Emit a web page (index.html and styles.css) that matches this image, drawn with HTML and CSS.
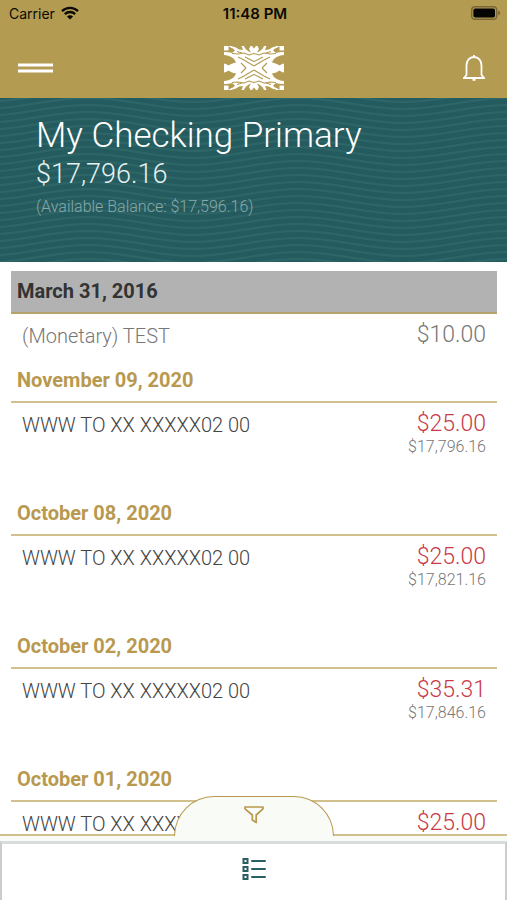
FILE: index.html
```html
<!DOCTYPE html>
<html lang="en">
<head>
<meta charset="utf-8">
<meta name="viewport" content="width=device-width, initial-scale=1">
<title>My Checking Primary</title>
<link rel="stylesheet" href="styles.css">
</head>
<body>
<div class="app">
  <header class="top">
    <div class="status">
      <div class="status-left">
        <span>Carrier</span>
        <svg class="wifi" viewBox="0 0 18 14" aria-hidden="true">
          <path d="M1 5.2a11.5 11.5 0 0 1 16 0M3.8 8.1a7.5 7.5 0 0 1 10.4 0" fill="none" stroke="#0b0a05" stroke-width="2.3"/>
          <path d="M9 13.6 5.9 10.5a4.4 4.4 0 0 1 6.2 0z" fill="#0b0a05"/>
        </svg>
      </div>
      <span class="clock">11:48 PM</span>
      <svg class="battery" viewBox="0 0 30 14" aria-hidden="true">
        <rect x="0.7" y="0.7" width="25" height="12.6" rx="3.4" fill="none" stroke="#7a6736" stroke-width="1.4"/>
        <rect x="2.4" y="2.4" width="21.6" height="9.2" rx="1.8" fill="#050402"/>
        <path d="M27.2 4.6v4.8c1.2-.4 1.9-1.3 1.9-2.4s-.7-2-1.9-2.4z" fill="#7a6736"/>
      </svg>
    </div>
    <nav class="bar">
      <button class="icon-button" aria-label="Menu">
        <svg class="menu-icon" viewBox="0 0 36 12"><path d="M0 3h35M0 9h35" stroke="#fff" stroke-width="2.8"/></svg>
      </button>
      <svg class="logo" viewBox="0 0 60 44" aria-hidden="true">
        <defs>
          <g id="quarter">
            <path d="M0 0H30V22H0z" fill="#fff"/>
            <path d="M0 9C6 9.500 10.500 12 12 16.500 9 17 6.500 18 4.500 19.500 3 18.500 1.500 17.500 0 17.500z" fill="#b39b52"/>
            <path d="M4.500 0V4.500H0V6C3 6 6 6.200 8 7L11 4.500 9 2.500 6.500 1.500z" fill="#b39b52"/>
            <path d="M7 0 12 1.500 15 3.500 19 4 17.500 0zM20 0C21 3 24 5.500 27 6.500L25 3 26.500 0zM28 0 30 2.500V0z" fill="#b39b52"/>
            <path d="M8 7.500 14 8 20 7 25 9 30 7.500M14 11 20 14 30 20M21 11 30 15.500M17 17 22 22M13 5.500 18 7" fill="none" stroke="#b39b52" stroke-width="1.1"/>
          </g>
        </defs>
        <use href="#quarter"/>
        <use href="#quarter" transform="matrix(-1 0 0 1 60 0)"/>
        <use href="#quarter" transform="matrix(1 0 0 -1 0 44)"/>
        <use href="#quarter" transform="matrix(-1 0 0 -1 60 44)"/>
      </svg>
      <button class="icon-button end" aria-label="Notifications">
        <svg class="bell" viewBox="0 0 24 28"><path d="M4.500 21V11.500C4.500 6.500 7.500 3 12 3s7.500 3.500 7.500 8.500V21l2.700 3H1.800zM12 1v2M10.500 25.800h3" fill="none" stroke="#fff" stroke-width="1.8" stroke-linejoin="round"/></svg>
      </button>
    </nav>
  </header>

  <section class="account">
    <svg class="waves" aria-hidden="true">
      <defs>
        <pattern id="wave" x="88" width="210" height="7" patternUnits="userSpaceOnUse">
          <g fill="none" stroke="#2e6668" stroke-width="2">
            <path d="M0 -14C38 -14 67 -3 105 -3S172 -14 210 -14"/>
            <path d="M0 -7C38 -7 67 4 105 4S172 -7 210 -7"/>
            <path d="M0 0C38 0 67 11 105 11S172 0 210 0"/>
            <path d="M0 7C38 7 67 18 105 18S172 7 210 7"/>
          </g>
        </pattern>
      </defs>
      <rect width="100%" height="100%" fill="url(#wave)"/>
    </svg>
    <div class="account-text">
      <h1>My Checking Primary</h1>
      <p class="balance">$17,796.16</p>
      <p class="available">(Available Balance: $17,596.16)</p>
    </div>
  </section>

  <main class="list">
    <section>
      <h2 class="date pending">March 31, 2016</h2>
      <div class="row short"><span class="name">(Monetary) TEST</span><div class="sums"><span class="amount">$10.00</span></div></div>
    </section>
    <section>
      <h2 class="date">November 09, 2020</h2>
      <div class="row"><span class="name">WWW TO XX XXXXX02 00</span><div class="sums"><span class="amount">$25.00</span><span class="after">$17,796.16</span></div></div>
    </section>
    <section>
      <h2 class="date">October 08, 2020</h2>
      <div class="row"><span class="name">WWW TO XX XXXXX02 00</span><div class="sums"><span class="amount">$25.00</span><span class="after">$17,821.16</span></div></div>
    </section>
    <section>
      <h2 class="date">October 02, 2020</h2>
      <div class="row"><span class="name">WWW TO XX XXXXX02 00</span><div class="sums"><span class="amount">$35.31</span><span class="after">$17,846.16</span></div></div>
    </section>
    <section>
      <h2 class="date">October 01, 2020</h2>
      <div class="row"><span class="name">WWW TO XX XXXXX02 00</span><div class="sums"><span class="amount">$25.00</span></div></div>
    </section>
  </main>

  <footer class="bottom">
    <div class="tray">
      <button class="filter" aria-label="Filter">
        <svg class="funnel" viewBox="0 0 20 18"><path d="M1 1h18v1.800L12.200 9v7.500L8.300 14V9L1 2.800z" fill="none" stroke="#b8994f" stroke-width="1.7" stroke-linejoin="round"/></svg>
      </button>
    </div>
    <button class="tab" aria-label="Transactions">
      <svg class="list-icon" viewBox="0 0 24 24"><path d="M1.500 2h4v4h-4zM1.500 10h4v4h-4zM1.500 18h4v4h-4z" fill="none" stroke="#2a5f61" stroke-width="2"/><path d="M10 4h13M10 12h13M10 20h13" stroke="#2a5f61" stroke-width="2" stroke-linecap="round"/></svg>
    </button>
  </footer>
</div>
</body>
</html>
```

FILE: styles.css
```css
* { box-sizing: border-box; }

body {
  margin: 0;
  background: #fff;
  font-family: Roboto, "Liberation Sans", sans-serif;
  font-weight: 300;
}

h1, h2, p { margin: 0; font-weight: 300; }

button {
  padding: 0;
  border: 0;
  background: none;
  font: inherit;
  cursor: pointer;
}

svg { display: block; }

.app {
  display: flex;
  flex-direction: column;
  height: 100vh;
  overflow: hidden;
}

.top { flex: none; background: #b39b52; }

.status {
  display: grid;
  grid-template-columns: 1fr auto 1fr;
  align-items: center;
  height: 26px;
  padding: 0 6px 0 9px;
  font-family: Inter, "Liberation Sans", sans-serif;
  font-size: 14px;
  font-weight: 400;
  color: #0b0a05;
}

.status-left { display: flex; align-items: center; gap: 6px; }
.wifi { width: 18px; height: 14px; }
.clock { font-size: 15px; font-weight: 600; }
.battery { width: 30px; height: 14px; justify-self: end; }

.bar {
  display: grid;
  grid-template-columns: 1fr auto 1fr;
  align-items: center;
  height: 72px;
  padding: 11px 18px 0;
}

.icon-button { justify-self: start; }
.icon-button.end { justify-self: end; }
.menu-icon { width: 36px; height: 12px; }
.logo { width: 60px; height: 44px; }
.bell { width: 30px; height: 28px; }

.account {
  position: relative;
  flex: none;
  height: 164px;
  padding: 17px 36px;
  background: #245b5e;
  color: #fff;
}

.waves {
  position: absolute;
  inset: 0;
  width: 100%;
  height: 100%;
}

.account-text { position: relative; }
h1 { font-size: 35px; line-height: 42px; }
.balance { font-size: 27px; line-height: 34px; color: #e9f2f2; }
.available { margin-top: 6px; font-size: 16px; line-height: 20px; color: #8aa9aa; }

.list {
  flex: 1;
  min-height: 0;
  padding: 9px 10px 0 11px;
  overflow: hidden;
}

.date {
  height: 43px;
  padding: 0 6px;
  border-bottom: 2px solid #d2c08c;
  font-size: 20px;
  font-weight: 700;
  line-height: 41px;
  color: #b8994f;
}

.date.pending {
  border-color: #b5a369;
  background: #b2b2b2;
  color: #333;
}

.row {
  display: flex;
  justify-content: space-between;
  height: 90px;
  padding: 6px 11px 0;
  color: #444;
}

.row.short { height: 46px; }
.name { font-size: 20px; line-height: 32px; }
.sums { display: flex; flex-direction: column; text-align: right; }
.amount { font-size: 23px; line-height: 29px; color: #c83a48; }
.after { font-size: 16px; line-height: 18px; color: #777; }
.short .name, .short .amount { color: #777; }

.bottom { position: relative; flex: none; }

.tray {
  height: 7px;
  border-top: 2px solid #d2c08c;
  background: #f8fbf6;
}

.filter {
  position: absolute;
  top: -38px;
  left: 50%;
  width: 160px;
  height: 40px;
  margin-left: -80px;
  border: 1px solid #b8994f;
  border-bottom: 0;
  border-radius: 40px 40px 0 0;
  background: #f8fbf6;
}

.funnel { width: 20px; height: 18px; margin: -3px auto 0; }

.tab {
  display: flex;
  justify-content: center;
  width: 100%;
  height: 59px;
  padding-top: 13px;
  border: 2px solid #ccc;
  border-top: 3px solid #d8dcda;
  border-bottom: 0;
  background: #fff;
}

.list-icon { width: 24px; height: 24px; }
```
